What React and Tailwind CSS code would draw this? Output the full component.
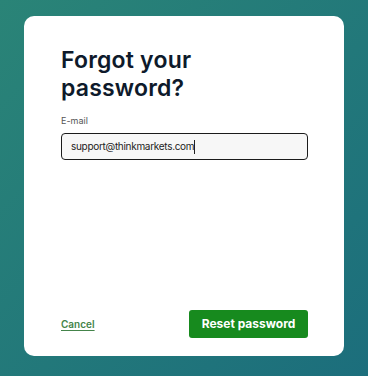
export default function App() {
  return (
    <div className="w-[368px] h-[376px] bg-gradient-to-br from-[#2a8477] to-[#1c6e7c] px-6 pt-4 pb-5 font-['Inter',sans-serif]">
      <div className="h-[340px] bg-white rounded-[10px] pl-[37px] pr-[37px] pt-[30px] pb-[18px] flex flex-col">
        <h1 className="text-[23px] leading-[28px] font-semibold text-[#0e1a2b] tracking-[0.2px]">
          Forgot your
          <br />
          password?
        </h1>
        <label className="mt-[13px] text-[9px] text-[#555] leading-[12px]">E-mail</label>
        <div className="mt-[6px] h-[27px] w-[247px] border-[1.5px] border-[#1b1b1b] rounded-[4px] bg-[#f7f7f7] flex items-center pl-[9px]">
          <span className="text-[10px] tracking-[-0.3px] text-[#222]">support@thinkmarkets.com</span>
          <span className="w-px h-[14px] bg-[#222]" />
        </div>
        <div className="mt-auto flex items-center justify-between w-[247px]">
          <a href="#" className="text-[10px] font-semibold text-[#44844a] underline underline-offset-2">
            Cancel
          </a>
          <button className="w-[119px] h-[28px] rounded-[3px] bg-[#178a1e] text-white text-[12px] font-bold">
            Reset password
          </button>
        </div>
      </div>
    </div>
  )
}
